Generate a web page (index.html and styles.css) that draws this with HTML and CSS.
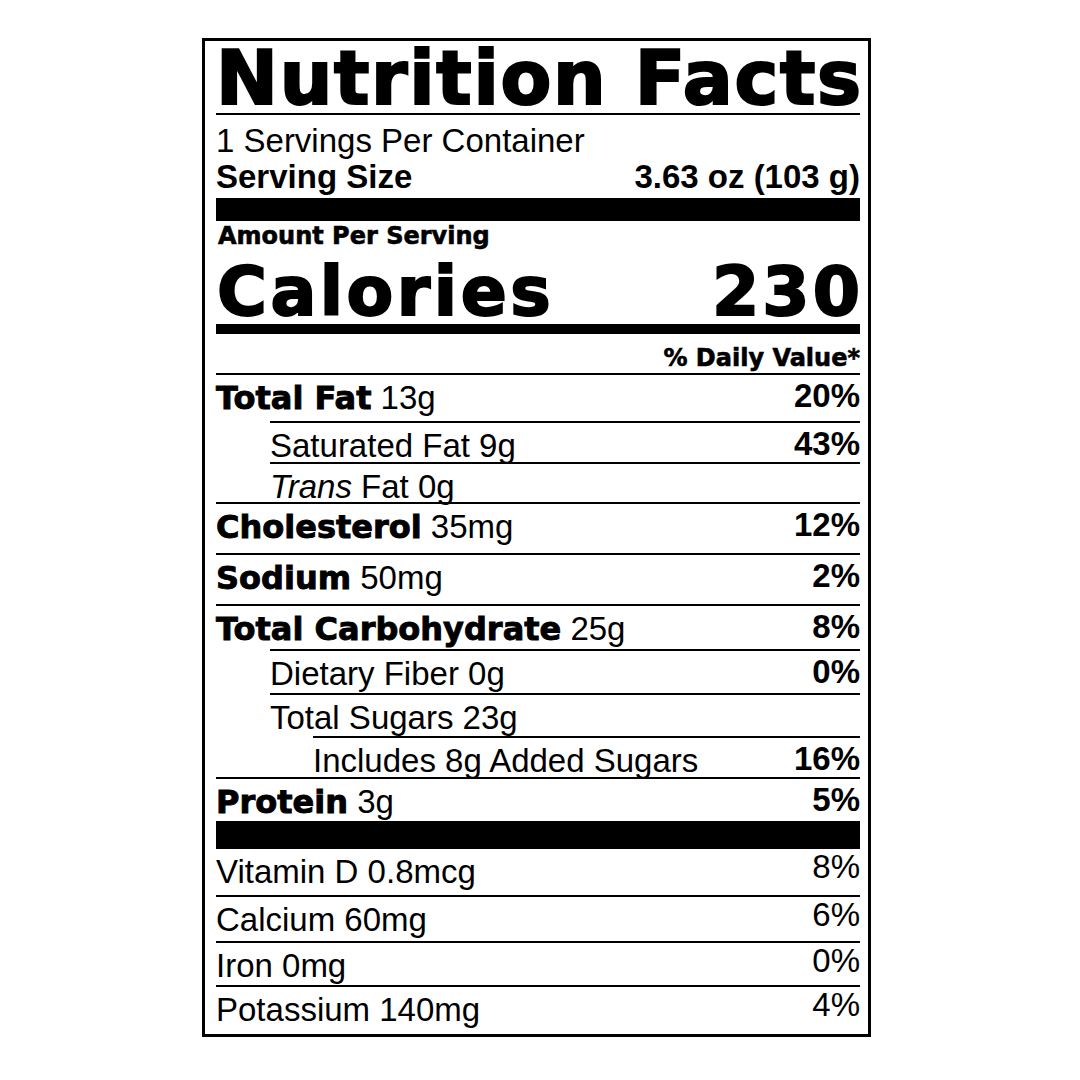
FILE: index.html
```html
<!DOCTYPE html>
<html lang="en">
<head>
<meta charset="utf-8">
<title>Nutrition Facts</title>
<link rel="stylesheet" href="styles.css">
</head>
<body>
<section class="label">
  <h1 class="title">Nutrition Facts</h1>
  <div class="servings">1 Servings Per Container</div>
  <div class="serving-size"><span>Serving Size</span><span>3.63 oz (103 g)</span></div>
  <div class="bar bar-lg"></div>
  <div class="amount">Amount Per Serving</div>
  <div class="calories"><span>Calories</span><span>230</span></div>
  <div class="dv">% Daily Value*</div>
  <ul class="nutrients">
    <li class="row h48"><span class="name"><b>Total Fat</b> 13g</span><span class="pct">20%</span></li>
    <li class="row h41 indent"><span class="name">Saturated Fat 9g</span><span class="pct">43%</span></li>
    <li class="row h40 indent"><span class="name"><i>Trans</i> Fat 0g</span></li>
    <li class="row h51"><span class="name"><b>Cholesterol</b> 35mg</span><span class="pct">12%</span></li>
    <li class="row h51"><span class="name"><b>Sodium</b> 50mg</span><span class="pct">2%</span></li>
    <li class="row h45"><span class="name"><b>Total Carbohydrate</b> 25g</span><span class="pct">8%</span></li>
    <li class="row h44 indent"><span class="name">Dietary Fiber 0g</span><span class="pct">0%</span></li>
    <li class="row h43 indent"><span class="name">Total Sugars 23g</span></li>
    <li class="row h41 indent2"><span class="name">Includes 8g Added Sugars</span><span class="pct">16%</span></li>
    <li class="row h44"><span class="name"><b>Protein</b> 3g</span><span class="pct">5%</span></li>
  </ul>
  <div class="bar bar-md"></div>
  <ul class="vitamins">
    <li class="row first h46"><span class="name">Vitamin D 0.8mcg</span><span class="pct">8%</span></li>
    <li class="row h46"><span class="name">Calcium 60mg</span><span class="pct">6%</span></li>
    <li class="row h44"><span class="name">Iron 0mg</span><span class="pct">0%</span></li>
    <li class="row h49"><span class="name">Potassium 140mg</span><span class="pct">4%</span></li>
  </ul>
</section>
</body>
</html>
```
FILE: styles.css
```css
html, body {
  margin: 0;
  padding: 0;
  background: #fff;
}

body {
  font-family: "Liberation Sans", Arial, sans-serif;
  color: #000;
}

.label {
  width: 644px;
  margin: 38px 0 0 202px;
  padding: 0 8px 0 11px;
  border: 3px solid #000;
}

.title {
  margin: 0;
  padding-top: 3px;
  font-family: "DejaVu Sans", sans-serif;
  font-weight: bold;
  font-size: 74px;
  line-height: 69px;
  letter-spacing: 1.7px;
  -webkit-text-stroke: 2.2px #000;
  white-space: nowrap;
  border-bottom: 2px solid #000;
}

.servings,
.serving-size {
  font-size: 33px;
  line-height: 36px;
}

.servings {
  margin-top: 8px;
}

.serving-size {
  display: flex;
  justify-content: space-between;
  font-weight: bold;
}

.bar {
  background: #000;
}

.bar-lg {
  height: 23px;
  margin-top: 3px;
}

.bar-md {
  height: 28px;
}

.amount,
.dv {
  font-family: "DejaVu Sans", sans-serif;
  font-weight: bold;
  font-size: 24px;
  line-height: 24px;
  -webkit-text-stroke: 0.6px #000;
}

.amount {
  margin-top: 3px;
  padding-left: 2px;
}

.calories {
  display: flex;
  justify-content: space-between;
  margin-top: 14px;
  padding-bottom: 2px;
  font-family: "DejaVu Sans", sans-serif;
  font-weight: bold;
  font-size: 68px;
  line-height: 60px;
  letter-spacing: 3.5px;
  -webkit-text-stroke: 2px #000;
  border-bottom: 10px solid #000;
}

.calories span:first-child {
  padding-left: 1px;
}

.calories span:last-child {
  letter-spacing: 3px;
  margin-right: -3px;
}

.dv {
  margin-top: 12px;
  padding-bottom: 3px;
  text-align: right;
}

.nutrients,
.vitamins {
  list-style: none;
  margin: 0;
  padding: 0;
}

.row {
  display: flex;
  justify-content: space-between;
  align-items: flex-start;
  box-sizing: border-box;
  border-top: 2px solid #000;
  font-size: 33px;
  line-height: 33px;
}

.row .name {
  padding-top: 6px;
  white-space: nowrap;
}

.row b {
  font-family: "DejaVu Sans", sans-serif;
  font-size: 32px;
  -webkit-text-stroke: 0.9px #000;
}

.nutrients .pct {
  padding-top: 4px;
  font-weight: bold;
}

.vitamins .pct {
  padding-top: 1px;
}

.vitamins .row.first {
  border-top: 0;
}

.indent {
  margin-left: 54px;
}

.indent2 {
  margin-left: 97px;
}

.h40 { height: 40px; }
.h41 { height: 41px; }
.h43 { height: 43px; }
.h44 { height: 44px; }
.h45 { height: 45px; }
.h46 { height: 46px; }
.h48 { height: 48px; }
.h49 { height: 49px; }
.h51 { height: 51px; }
```
